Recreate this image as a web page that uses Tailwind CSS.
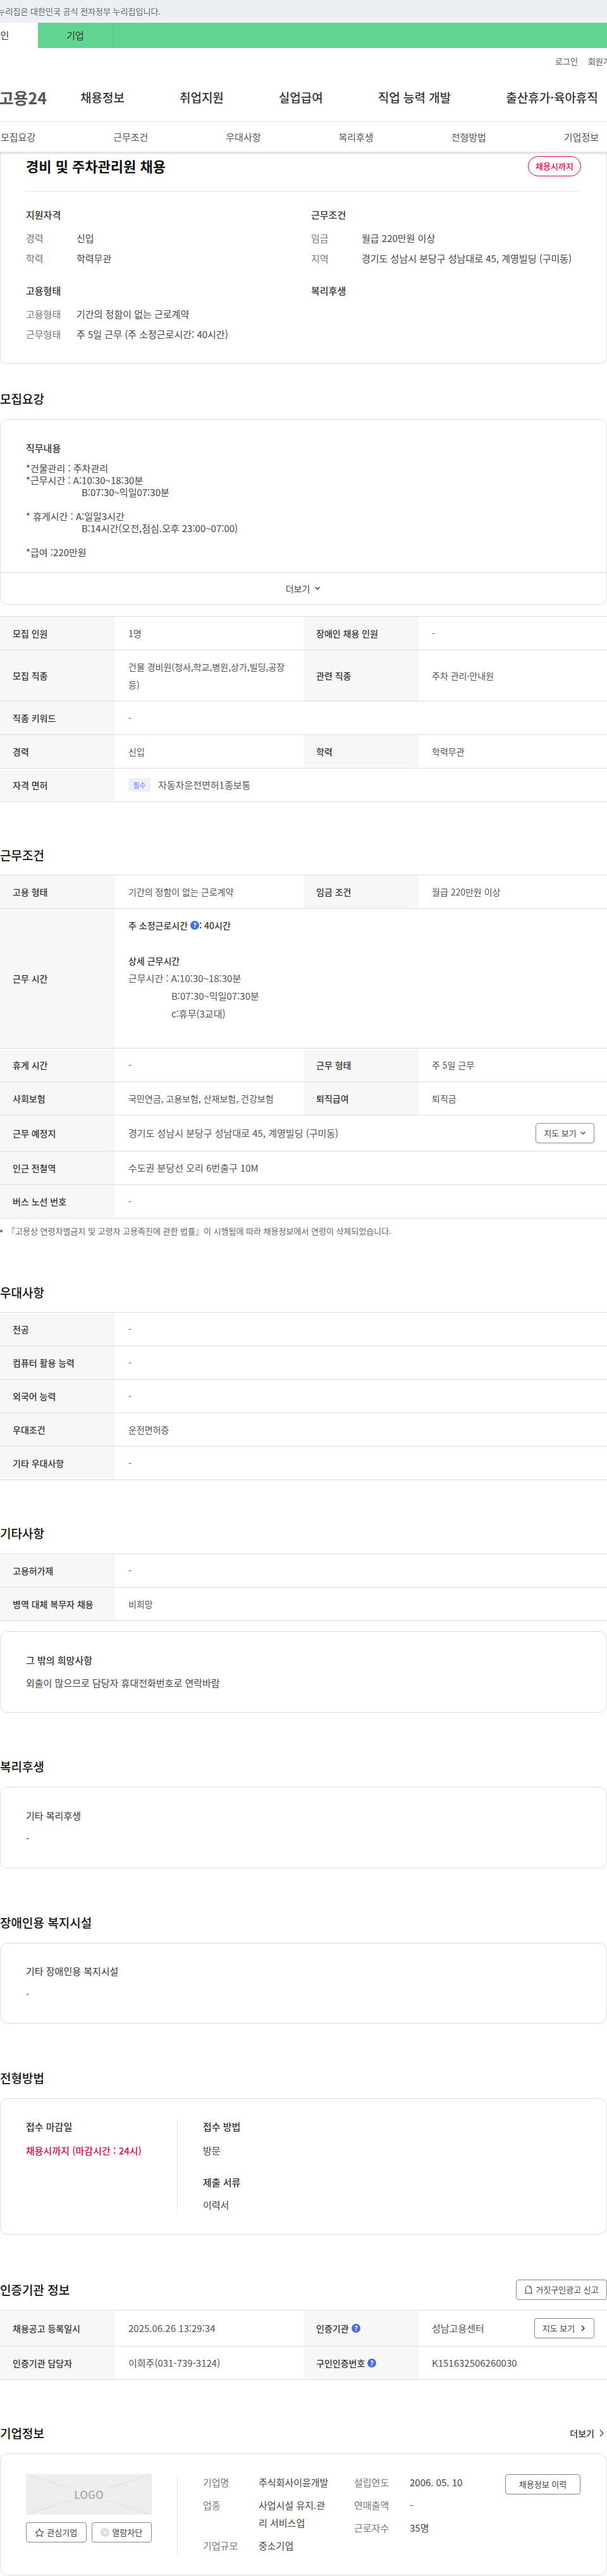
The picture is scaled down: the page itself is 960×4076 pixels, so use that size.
<!DOCTYPE html>
<html lang="ko">
<head>
    <meta charset="UTF-8">
    <meta name="viewport" content="width=device-width, initial-scale=1.0">
    <title>경비 및 주차관리원 채용</title>
    <script src="https://cdn.jsdelivr.net/npm/@tailwindcss/browser@4"></script>
</head>
<body class="w-[960px] h-[4076px] overflow-hidden bg-white text-[15px] leading-[28px] text-[#444] font-['Noto_Sans_CJK_KR','Noto_Sans',sans-serif]">

    <!-- top notice -->
    <div class="h-[36px] bg-[#eceff4] flex items-center">
        <div class="w-[254px] flex justify-end overflow-hidden whitespace-nowrap text-[13px] text-[#666]">누리집은 대한민국 공식 전자정부 누리집입니다.</div>
    </div>
    <div class="h-[40px] bg-[#61d492] flex">
        <div class="w-[119px] -ml-[59px] flex items-center justify-center bg-white text-[#333]">개인</div>
        <div class="w-[119px] flex items-center justify-center border-r border-[#55c585] text-[#333]">기업</div>
    </div>

    <!-- header -->
    <div class="h-[40px] flex items-center gap-[16px] whitespace-nowrap text-[13px] text-[#555] pt-[1px]">
        <span class="ml-[878px]">로그인</span><span>회원가입</span>
    </div>
    <div class="h-[76px] flex items-center text-[19px] font-medium text-[#333] whitespace-nowrap">
        <div class="w-[74px] flex justify-end overflow-hidden text-[25px] font-bold text-[#555]">고용24</div>
        <nav class="flex gap-[87px] ml-[53px]">
            <a>채용정보</a><a>취업지원</a><a>실업급여</a><a>직업 능력 개발</a><a>출산휴가·육아휴직</a>
        </nav>
    </div>
    <div class="relative h-[49px] flex items-center justify-between pl-[1px] pr-[13px] border-y border-[#e5e5e5] shadow-[0_2px_3px_rgba(0,0,0,0.15)] text-[#555]">
        <span>모집요강</span><span>근무조건</span><span>우대사항</span><span>복리후생</span><span>전형방법</span><span>기업정보</span>
    </div>

    <!-- summary card -->
    <section class="h-[335px] border-x border-b border-[#ddd] rounded-b-[12px] px-[40px]">
        <div class="h-[62px] flex justify-between items-start border-b border-[#e8e8e8]">
            <h1 class="text-[22px] leading-[32px] font-bold text-[#111] mt-[5px]">경비 및 주차관리원 채용</h1>
            <span class="h-[32px] w-[84px] mt-[6px] flex items-center justify-center rounded-full border border-[#e6004e] text-[13px] font-medium text-[#e6004e]">채용시까지</span>
        </div>
        <div class="grid grid-cols-[451px_1fr] mt-[23px]">
            <div>
                <h3 class="font-medium text-[#333]">지원자격</h3>
                <dl class="grid grid-cols-[80px_1fr] gap-y-[4px] mt-[9px]"><dt class="text-[#777]">경력</dt><dd>신입</dd><dt class="text-[#777]">학력</dt><dd>학력무관</dd></dl>
            </div>
            <div>
                <h3 class="font-medium text-[#333]">근무조건</h3>
                <dl class="grid grid-cols-[80px_1fr] gap-y-[4px] mt-[9px]"><dt class="text-[#777]">임금</dt><dd>월급 220만원 이상</dd><dt class="text-[#777]">지역</dt><dd class="whitespace-nowrap">경기도 성남시 분당구 성남대로 45, 계영빌딩 (구미동)</dd></dl>
            </div>
            <div class="mt-[23px]">
                <h3 class="font-medium text-[#333]">고용형태</h3>
                <dl class="grid grid-cols-[80px_1fr] gap-y-[4px] mt-[9px]"><dt class="text-[#777]">고용형태</dt><dd>기간의 정함이 없는 근로계약</dd><dt class="text-[#777]">근무형태</dt><dd>주 5일 근무 (주 소정근로시간: 40시간)</dd></dl>
            </div>
            <div class="mt-[23px]">
                <h3 class="font-medium text-[#333]">복리후생</h3>
            </div>
        </div>
    </section>

    <!-- 모집요강 -->
    <h2 class="mt-[39px] text-[19px] leading-[32px] font-medium text-[#111]">모집요강</h2>
    <section class="mt-[16px] h-[294px] border border-[#ddd] rounded-[12px] flex flex-col">
        <div class="h-[241px] px-[40px] text-[15px] leading-[19px]">
            <h3 class="mt-[31px] leading-[28px] font-medium text-[#333]">직무내용</h3>
            <p class="mt-[8px]">*건물관리 : 주차관리</p>
            <p>*근무시간 : A:10:30~18:30분</p>
            <p class="pl-[88px]">B:07:30~익일07:30분</p>
            <p class="mt-[19px]">* 휴게시간 : A:일일3시간</p>
            <p class="pl-[88px]">B:14시간(오전,점심.오후 23:00~07:00)</p>
            <p class="mt-[19px]">*급여 :220만원</p>
        </div>
        <button class="flex-1 border-t border-[#ddd] flex items-center justify-center gap-[6px] text-[14px] text-[#444]">더보기
            <svg class="w-[12px] h-[12px]" viewBox="0 0 12 12" fill="none" stroke="#333" stroke-width="1.5"><path d="M2.5 4l3.5 3.5L9.5 4"/></svg>
        </button>
    </section>

    <div class="mt-[18px] border-t border-[#ddd] text-[14px]">
        <div class="flex border-b border-[#ddd]"><div class="w-[182px] shrink-0 bg-[#f7f7f7] px-[20px] py-[12px] flex items-center font-medium text-[#333]">모집 인원</div><div class="w-[298px] shrink-0 px-[21px] py-[12px] flex items-center text-[#555]">1명</div><div class="w-[182px] shrink-0 bg-[#f7f7f7] px-[20px] py-[12px] flex items-center font-medium text-[#333]">장애인 채용 인원</div><div class="flex-1 px-[21px] py-[12px] flex items-center text-[#555]">-</div></div>
        <div class="flex border-b border-[#ddd]"><div class="w-[182px] shrink-0 bg-[#f7f7f7] px-[20px] py-[12px] flex items-center font-medium text-[#333]">모집 직종</div><div class="w-[298px] shrink-0 px-[21px] py-[12px] flex items-center text-[#555]">건물 경비원(청사,학교,병원,상가,빌딩,공장등)</div><div class="w-[182px] shrink-0 bg-[#f7f7f7] px-[20px] py-[12px] flex items-center font-medium text-[#333]">관련 직종</div><div class="flex-1 px-[21px] py-[12px] flex items-center text-[#555]">주차 관리·안내원</div></div>
        <div class="flex border-b border-[#ddd]"><div class="w-[182px] shrink-0 bg-[#f7f7f7] px-[20px] py-[12px] flex items-center font-medium text-[#333]">직종 키워드</div><div class="flex-1 px-[21px] py-[12px] flex items-center text-[#555]">-</div></div>
        <div class="flex border-b border-[#ddd]"><div class="w-[182px] shrink-0 bg-[#f7f7f7] px-[20px] py-[12px] flex items-center font-medium text-[#333]">경력</div><div class="w-[298px] shrink-0 px-[21px] py-[12px] flex items-center text-[#555]">신입</div><div class="w-[182px] shrink-0 bg-[#f7f7f7] px-[20px] py-[12px] flex items-center font-medium text-[#333]">학력</div><div class="flex-1 px-[21px] py-[12px] flex items-center text-[#555]">학력무관</div></div>
        <div class="flex border-b border-[#ddd]"><div class="w-[182px] shrink-0 bg-[#f7f7f7] px-[20px] py-[12px] flex items-center font-medium text-[#333]">자격 면허</div><div class="flex-1 px-[21px] py-[12px] flex items-center gap-[12px] text-[15px] text-[#555]"><span class="w-[35px] h-[22px] rounded-[3px] bg-[#eef1fd] text-[#5b7be8] text-[11px] flex items-center justify-center">필수</span>자동차운전면허1종보통</div></div>
    </div>

    <!-- 근무조건 -->
    <h2 class="mt-[68px] text-[19px] leading-[32px] font-medium text-[#111]">근무조건</h2>
    <div class="mt-[15px] border-t border-[#ddd] text-[14px]">
        <div class="flex border-b border-[#ddd]"><div class="w-[182px] shrink-0 bg-[#f7f7f7] px-[20px] py-[12px] flex items-center font-medium text-[#333]">고용 형태</div><div class="w-[298px] shrink-0 px-[21px] py-[12px] flex items-center text-[#555]">기간의 정함이 없는 근로계약</div><div class="w-[182px] shrink-0 bg-[#f7f7f7] px-[20px] py-[12px] flex items-center font-medium text-[#333]">임금 조건</div><div class="flex-1 px-[21px] py-[12px] flex items-center text-[#555]">월급 220만원 이상</div></div>
        <div class="flex border-b border-[#ddd]"><div class="w-[182px] shrink-0 bg-[#f7f7f7] px-[20px] py-[12px] flex items-center font-medium text-[#333]">근무 시간</div><div class="flex-1 px-[21px] py-[12px] text-[#555]">
            <p class="flex items-center font-medium text-[#333]">주 소정근로시간&nbsp;<svg class="w-[14px] h-[14px]" viewBox="0 0 14 14"><circle cx="7" cy="7" r="7" fill="#4a6ee0"/><text x="7" y="10.5" text-anchor="middle" font-size="10" font-weight="700" fill="#fff">?</text></svg>: 40시간</p>
            <p class="mt-[28px] font-medium text-[#333]">상세 근무시간</p>
            <p class="text-[15px]">근무시간 : A:10:30~18:30분</p>
            <p class="pl-[68px] text-[15px]">B:07:30~익일07:30분</p>
            <p class="pl-[68px] text-[15px]">c:휴무(3교대)</p>
            <p class="h-[28px]"></p>
        </div></div>
        <div class="flex border-b border-[#ddd]"><div class="w-[182px] shrink-0 bg-[#f7f7f7] px-[20px] py-[12px] flex items-center font-medium text-[#333]">휴게 시간</div><div class="w-[298px] shrink-0 px-[21px] py-[12px] flex items-center text-[#555]">-</div><div class="w-[182px] shrink-0 bg-[#f7f7f7] px-[20px] py-[12px] flex items-center font-medium text-[#333]">근무 형태</div><div class="flex-1 px-[21px] py-[12px] flex items-center text-[#555]">주 5일 근무</div></div>
        <div class="flex border-b border-[#ddd]"><div class="w-[182px] shrink-0 bg-[#f7f7f7] px-[20px] py-[12px] flex items-center font-medium text-[#333]">사회보험</div><div class="w-[298px] shrink-0 px-[21px] py-[12px] flex items-center text-[#555]">국민연금, 고용보험, 산재보험, 건강보험</div><div class="w-[182px] shrink-0 bg-[#f7f7f7] px-[20px] py-[12px] flex items-center font-medium text-[#333]">퇴직급여</div><div class="flex-1 px-[21px] py-[12px] flex items-center text-[#555]">퇴직금</div></div>
        <div class="flex border-b border-[#ddd]"><div class="w-[182px] shrink-0 bg-[#f7f7f7] px-[20px] py-[12px] flex items-center font-medium text-[#333]">근무 예정지</div><div class="flex-1 pl-[21px] pr-[20px] py-[12px] flex items-center justify-between text-[15px] text-[#555]">경기도 성남시 분당구 성남대로 45, 계영빌딩 (구미동)
            <button class="w-[93px] h-[32px] border border-[#888] rounded-[4px] flex items-center justify-center gap-[5px] text-[13px] text-[#444]">지도 보기<svg class="w-[10px] h-[10px]" viewBox="0 0 10 10" fill="none" stroke="#333" stroke-width="1.2"><path d="M1.5 3l3.5 3.5L8.5 3"/></svg></button>
        </div></div>
        <div class="flex border-b border-[#ddd]"><div class="w-[182px] shrink-0 bg-[#f7f7f7] px-[20px] py-[12px] flex items-center font-medium text-[#333]">인근 전철역</div><div class="flex-1 px-[21px] py-[12px] flex items-center text-[15px] text-[#555]">수도권 분당선 오리 6번출구 10M</div></div>
        <div class="flex border-b border-[#ddd]"><div class="w-[182px] shrink-0 bg-[#f7f7f7] px-[20px] py-[12px] flex items-center font-medium text-[#333]">버스 노선 번호</div><div class="flex-1 px-[21px] py-[12px] flex items-center text-[#555]">-</div></div>
    </div>
    <p class="mt-[6px] text-[13px] text-[#666] flex items-center gap-[7px]"><span class="w-[4px] h-[4px] rounded-full bg-[#666]"></span>『고용상 연령차별금지 및 고령자 고용촉진에 관한 법률』이 시행됨에 따라 채용정보에서 연령이 삭제되었습니다.</p>

    <!-- 우대사항 -->
    <h2 class="mt-[67px] text-[19px] leading-[32px] font-medium text-[#111]">우대사항</h2>
    <div class="mt-[15px] border-t border-[#ddd] text-[14px]">
        <div class="flex border-b border-[#ddd]"><div class="w-[182px] shrink-0 bg-[#f7f7f7] px-[20px] py-[12px] flex items-center font-medium text-[#333]">전공</div><div class="flex-1 px-[21px] py-[12px] flex items-center text-[#555]">-</div></div>
        <div class="flex border-b border-[#ddd]"><div class="w-[182px] shrink-0 bg-[#f7f7f7] px-[20px] py-[12px] flex items-center font-medium text-[#333]">컴퓨터 활용 능력</div><div class="flex-1 px-[21px] py-[12px] flex items-center text-[#555]">-</div></div>
        <div class="flex border-b border-[#ddd]"><div class="w-[182px] shrink-0 bg-[#f7f7f7] px-[20px] py-[12px] flex items-center font-medium text-[#333]">외국어 능력</div><div class="flex-1 px-[21px] py-[12px] flex items-center text-[#555]">-</div></div>
        <div class="flex border-b border-[#ddd]"><div class="w-[182px] shrink-0 bg-[#f7f7f7] px-[20px] py-[12px] flex items-center font-medium text-[#333]">우대조건</div><div class="flex-1 px-[21px] py-[12px] flex items-center text-[#555]">운전면허증</div></div>
        <div class="flex border-b border-[#ddd]"><div class="w-[182px] shrink-0 bg-[#f7f7f7] px-[20px] py-[12px] flex items-center font-medium text-[#333]">기타 우대사항</div><div class="flex-1 px-[21px] py-[12px] flex items-center text-[#555]">-</div></div>
    </div>

    <!-- 기타사항 -->
    <h2 class="mt-[68px] text-[19px] leading-[32px] font-medium text-[#111]">기타사항</h2>
    <div class="mt-[16px] border-t border-[#ddd] text-[14px]">
        <div class="flex border-b border-[#ddd]"><div class="w-[182px] shrink-0 bg-[#f7f7f7] px-[20px] py-[12px] flex items-center font-medium text-[#333]">고용허가제</div><div class="flex-1 px-[21px] py-[12px] flex items-center text-[#555]">-</div></div>
        <div class="flex border-b border-[#ddd]"><div class="w-[182px] shrink-0 bg-[#f7f7f7] px-[20px] py-[12px] flex items-center font-medium text-[#333]">병역 대체 복무자 채용</div><div class="flex-1 px-[21px] py-[12px] flex items-center text-[#555]">비희망</div></div>
    </div>
    <section class="mt-[16px] h-[129px] border border-[#ddd] rounded-[12px] px-[40px] pt-[31px]">
        <h3 class="font-medium text-[#333]">그 밖의 희망사항</h3>
        <p class="mt-[8px]">외출이 많으므로 담당자 휴대전화번호로 연락바람</p>
    </section>

    <!-- 복리후생 -->
    <h2 class="mt-[69px] text-[19px] leading-[32px] font-medium text-[#111]">복리후생</h2>
    <section class="mt-[16px] h-[129px] border border-[#ddd] rounded-[12px] px-[40px] pt-[31px]">
        <h3 class="text-[#333]">기타 복리후생</h3>
        <p class="mt-[8px]">-</p>
    </section>

    <!-- 장애인용 복지시설 -->
    <h2 class="mt-[70px] text-[19px] leading-[32px] font-medium text-[#111]">장애인용 복지시설</h2>
    <section class="mt-[16px] h-[128px] border border-[#ddd] rounded-[12px] px-[40px] pt-[30px]">
        <h3 class="text-[#333]">기타 장애인용 복지시설</h3>
        <p class="mt-[8px]">-</p>
    </section>

    <!-- 전형방법 -->
    <h2 class="mt-[70px] text-[19px] leading-[32px] font-medium text-[#111]">전형방법</h2>
    <section class="mt-[16px] h-[216px] border border-[#ddd] rounded-[12px] px-[40px] pt-[31px]">
        <div class="flex h-[152px]">
            <div class="w-[240px] border-r border-[#e5e5e5]">
                <h3 class="-mt-[1px] text-[#333] font-medium">접수 마감일</h3>
                <p class="mt-[10px] font-medium text-[#e6004e]">채용시까지 (마감시간 : 24시)</p>
            </div>
            <div class="pl-[40px]">
                <h3 class="-mt-[1px] text-[#333] font-medium">접수 방법</h3>
                <p class="mt-[10px]">방문</p>
                <h3 class="mt-[22px] text-[#333] font-medium">제출 서류</h3>
                <p class="mt-[8px]">이력서</p>
            </div>
        </div>
    </section>

    <!-- 인증기관 정보 -->
    <div class="mt-[71px] flex items-center justify-between">
        <h2 class="text-[19px] leading-[32px] font-medium text-[#111]">인증기관 정보</h2>
        <button class="w-[144px] h-[32px] border border-[#888] rounded-[4px] flex items-center justify-center gap-[4px] text-[13px] text-[#444]">
            <svg class="w-[14px] h-[16px]" viewBox="0 0 14 16" fill="none" stroke="#444" stroke-width="1.1"><path d="M2.5 13.5V6.5a4.5 4.5 0 0 1 9 0v7M1 13.5h12M8.5 3.5a3 3 0 0 1 1.2 2.5"/></svg>거짓구인광고 신고
        </button>
    </div>
    <div class="mt-[16px] border-t border-[#ddd] text-[14px]">
        <div class="flex border-b border-[#ddd]"><div class="w-[182px] shrink-0 bg-[#f7f7f7] px-[20px] flex items-center font-medium text-[#333]">채용공고 등록일시</div><div class="w-[298px] shrink-0 px-[21px] flex items-center text-[15px] text-[#555]">2025.06.26 13:29:34</div><div class="w-[182px] shrink-0 bg-[#f7f7f7] px-[20px] flex items-center gap-[4px] font-medium text-[#333]">인증기관<svg class="w-[14px] h-[14px]" viewBox="0 0 14 14"><circle cx="7" cy="7" r="7" fill="#4a6ee0"/><text x="7" y="10.5" text-anchor="middle" font-size="10" font-weight="700" fill="#fff">?</text></svg></div><div class="flex-1 pl-[21px] pr-[20px] py-[12px] flex items-center justify-between text-[15px] text-[#555]">성남고용센터
            <button class="w-[95px] h-[32px] border border-[#888] rounded-[4px] flex items-center justify-center gap-[8px] text-[13px] text-[#444]">지도 보기<svg class="w-[10px] h-[12px]" viewBox="0 0 10 12" fill="none" stroke="#333" stroke-width="1.6"><path d="M3 2l4 4-4 4"/></svg></button>
        </div></div>
        <div class="flex border-b border-[#ddd]"><div class="w-[182px] shrink-0 bg-[#f7f7f7] px-[20px] py-[12px] flex items-center font-medium text-[#333]">인증기관 담당자</div><div class="w-[298px] shrink-0 px-[21px] py-[12px] flex items-center text-[15px] text-[#555]">이희주(031-739-3124)</div><div class="w-[182px] shrink-0 bg-[#f7f7f7] px-[20px] py-[12px] flex items-center gap-[4px] font-medium text-[#333]">구인인증번호<svg class="w-[14px] h-[14px]" viewBox="0 0 14 14"><circle cx="7" cy="7" r="7" fill="#4a6ee0"/><text x="7" y="10.5" text-anchor="middle" font-size="10" font-weight="700" fill="#fff">?</text></svg></div><div class="flex-1 px-[21px] py-[12px] flex items-center text-[15px] text-[#555]">K151632506260030</div></div>
    </div>

    <!-- 기업정보 -->
    <div class="mt-[68px] flex items-center justify-between">
        <h2 class="text-[19px] leading-[32px] font-medium text-[#111]">기업정보</h2>
        <a class="flex items-center gap-[8px] pr-[4px] text-[14px] font-medium text-[#333]">더보기<svg class="w-[8px] h-[14px]" viewBox="0 0 8 14" fill="none" stroke="#333" stroke-width="1.2"><path d="M1 2l5 5-5 5"/></svg></a>
    </div>
    <section class="mt-[16px] h-[193px] border border-[#ddd] rounded-[12px] px-[40px] pt-[32px] flex">
        <div class="w-[240px] h-[127px] border-r border-[#e5e5e5] shrink-0">
            <div class="relative w-[199px] h-[64px] bg-[#eeeeee] flex items-center justify-center text-[17px] font-medium text-[#aaa]">
                <svg class="absolute inset-0 w-full h-full" viewBox="0 0 199 64" fill="none" stroke="#ddd"><path d="M0 0L72 23M199 0L127 23M0 64L72 41M199 64L127 41"/></svg>LOGO
            </div>
            <div class="flex gap-[8px] mt-[12px] w-[199px]">
                <button class="flex-1 h-[32px] border border-[#888] rounded-[4px] flex items-center justify-center gap-[4px] text-[13px] text-[#444]"><svg class="w-[15px] h-[15px]" viewBox="0 0 15 15" fill="none" stroke="#444" stroke-width="1.1"><path d="M7.5 1.5l1.9 4 4.5.6-3.3 3 .9 4.4-4-2.2-4 2.2.9-4.4-3.3-3 4.5-.6z"/></svg>관심기업</button>
                <button class="flex-1 h-[32px] border border-[#888] rounded-[4px] flex items-center justify-center gap-[4px] text-[13px] text-[#444]"><svg class="w-[14px] h-[14px]" viewBox="0 0 14 14"><circle cx="7" cy="7" r="7" fill="#ddd"/><path d="M4.5 4.5l5 5M9.5 4.5l-5 5" stroke="#fff" stroke-width="1.3"/></svg>열람차단</button>
            </div>
        </div>
        <div class="pl-[40px] w-[279px] shrink-0 grid grid-cols-[88px_112px] gap-y-[8px] content-start -mt-[1px]">
            <span class="text-[#777]">기업명</span><span class="whitespace-nowrap">주식회사이윤개발</span>
            <span class="text-[#777]">업종</span><span class="break-all">사업시설 유지.관리 서비스업</span>
            <span class="text-[#777]">기업규모</span><span>중소기업</span>
        </div>
        <div class="w-[240px] shrink-0 grid grid-cols-[88px_1fr] gap-y-[8px] content-start -mt-[1px]">
            <span class="text-[#777]">설립연도</span><span>2006. 05. 10</span>
            <span class="text-[#777]">연매출액</span><span>-</span>
            <span class="text-[#777]">근로자수</span><span>35명</span>
        </div>
        <button class="w-[119px] h-[32px] border border-[#888] rounded-[4px] text-[13px] text-[#444] shrink-0 -ml-[1px]">채용정보 이력</button>
    </section>
</body>
</html>
